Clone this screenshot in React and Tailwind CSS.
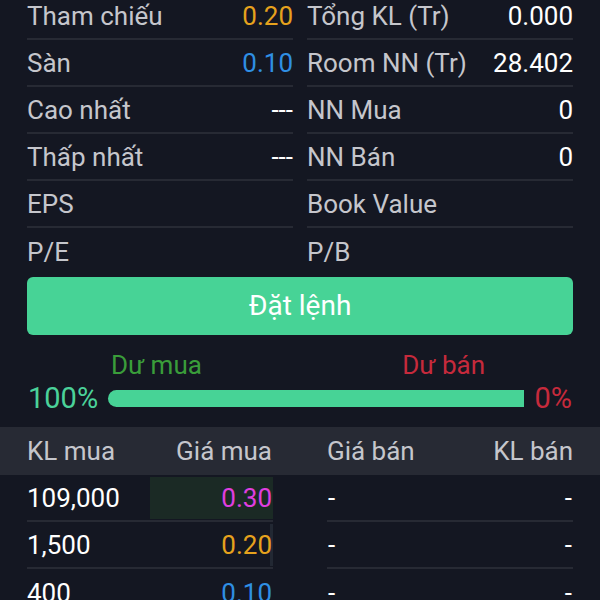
const STATS = [
  [
    { label: 'Tham chiếu', value: '0.20', color: 'text-[#e6a21d]' },
    { label: 'Sàn', value: '0.10', color: 'text-[#2f8fe4]' },
    { label: 'Cao nhất', value: '---', color: 'text-white' },
    { label: 'Thấp nhất', value: '---', color: 'text-white' },
    { label: 'EPS', value: '' },
    { label: 'P/E', value: '' },
  ],
  [
    { label: 'Tổng KL (Tr)', value: '0.000', color: 'text-white' },
    { label: 'Room NN (Tr)', value: '28.402', color: 'text-white' },
    { label: 'NN Mua', value: '0', color: 'text-white' },
    { label: 'NN Bán', value: '0', color: 'text-white' },
    { label: 'Book Value', value: '' },
    { label: 'P/B', value: '' },
  ],
]

const BOOK = [
  { vol: '109,000', price: '0.30', color: 'text-[#e03ee0]', bar: 'w-[123px] bg-[#1b2a25]' },
  { vol: '1,500', price: '0.20', color: 'text-[#e6a21d]', bar: 'w-[3px] bg-[#222833]' },
  { vol: '400', price: '0.10', color: 'text-[#2f8fe4]', bar: 'w-0' },
]

function StatColumn({ rows }) {
  return (
    <div className="flex flex-col">
      {rows.map((r, i) => (
        <div
          key={r.label}
          className={`flex items-center justify-between h-[47px] ${i < rows.length - 1 ? 'border-b-2 border-[#272a34]' : ''}`}
        >
          <span className="text-[#c5c6cc]">{r.label}</span>
          <span className={r.color}>{r.value}</span>
        </div>
      ))}
    </div>
  )
}

export default function App() {
  return (
    <div
      className="w-[600px] h-[600px] overflow-hidden bg-[#141722] text-[26px] leading-none"
      style={{ fontFamily: 'Roboto, "Noto Sans", sans-serif' }}
    >
      {/* Stats */}
      <div className="px-[27px] -mt-[7px] grid grid-cols-2 gap-x-[14px]">
        <StatColumn rows={STATS[0]} />
        <StatColumn rows={STATS[1]} />
      </div>

      {/* Order button */}
      <div className="px-[27px] mt-[2px]">
        <div className="h-[58px] rounded-[6px] bg-[#47d396] flex items-center justify-center text-white text-[28px]">
          Đặt lệnh
        </div>
      </div>

      {/* Buy / sell pressure */}
      <div className="px-[27px] mt-[18px] flex items-center h-[24px]">
        <span className="ml-[84px] text-[#3a9d3a] text-[26px]">Dư mua</span>
        <span className="ml-auto mr-[88px] text-[#c62a3c] text-[26px]">Dư bán</span>
      </div>
      <div className="pl-[28px] pr-[28px] mt-[6px] flex items-center h-[30px]">
        <span className="text-[#4bd29a] text-[29px] w-[80px]">100%</span>
        <div className="flex-1 h-[17px] rounded-l-full bg-[#47d396]" />
        <span className="text-[#c62a3c] text-[29px] ml-[10px]">0%</span>
      </div>

      {/* Order book */}
      <div className="mt-[14px] h-[48px] bg-[#272a34] px-[27px] grid grid-cols-2 gap-x-[54px] items-center text-[#c5c6cc] text-[26px]">
        <div className="flex justify-between">
          <span>KL mua</span>
          <span className="mr-[1px]">Giá mua</span>
        </div>
        <div className="flex justify-between">
          <span>Giá bán</span>
          <span>KL bán</span>
        </div>
      </div>
      <div className="px-[27px] grid grid-cols-2 gap-x-[54px]">
        <div className="flex flex-col">
          {BOOK.map((b, i) => (
            <div
              key={b.vol}
              className={`flex items-center justify-between h-[47px] ${i < BOOK.length - 1 ? 'border-b-2 border-[#272a34]' : ''}`}
            >
              <span className="text-white">{b.vol}</span>
              <div className="h-full flex items-center">
                <div className={`h-[42px] flex items-center justify-end ${b.bar}`}>
                  <span className={`${b.color} mr-[1px]`}>{b.price}</span>
                </div>
              </div>
            </div>
          ))}
        </div>
        <div className="flex flex-col">
          {BOOK.map((b, i) => (
            <div
              key={b.vol}
              className={`flex items-center justify-between h-[47px] text-white ${i < BOOK.length - 1 ? 'border-b-2 border-[#272a34]' : ''}`}
            >
              <span className="ml-[1px]">-</span>
              <span className="mr-[1px]">-</span>
            </div>
          ))}
        </div>
      </div>
    </div>
  )
}
